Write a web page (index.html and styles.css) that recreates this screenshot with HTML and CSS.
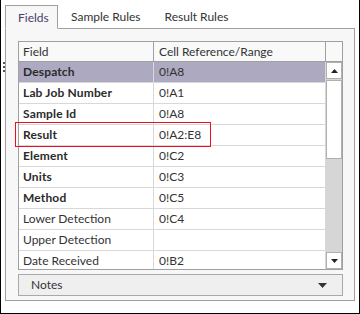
FILE: index.html
```html
<!DOCTYPE html>
<html>
<head>
<meta charset="utf-8">
<link rel="stylesheet" href="styles.css">
</head>
<body>
<div class="frame">
  <div class="grip"></div>
  <div class="tabs">
    <div class="tab active">Fields</div>
    <div class="tab">Sample Rules</div>
    <div class="tab">Result Rules</div>
  </div>
  <div class="panel">
    <div class="grid">
      <div class="head">
        <div class="c1">Field</div>
        <div class="c2">Cell Reference/Range</div>
        <div class="c3"></div>
      </div>
      <div class="body">
        <div class="rows">
          <div class="row sel"><div class="c1 b">Despatch</div><div class="c2">0!A8</div></div>
          <div class="row"><div class="c1 b">Lab Job Number</div><div class="c2">0!A1</div></div>
          <div class="row"><div class="c1 b">Sample Id</div><div class="c2">0!A8</div></div>
          <div class="row"><div class="c1 b">Result</div><div class="c2">0!A2:E8</div></div>
          <div class="row"><div class="c1 b">Element</div><div class="c2">0!C2</div></div>
          <div class="row"><div class="c1 b">Units</div><div class="c2">0!C3</div></div>
          <div class="row"><div class="c1 b">Method</div><div class="c2">0!C5</div></div>
          <div class="row"><div class="c1">Lower Detection</div><div class="c2">0!C4</div></div>
          <div class="row"><div class="c1">Upper Detection</div><div class="c2"></div></div>
          <div class="row"><div class="c1">Date Received</div><div class="c2">0!B2</div></div>
        </div>
        <div class="scroll">
          <div class="sbtn"><svg width="7" height="4" viewBox="0 0 7 4"><path d="M0 4 L3.5 0 L7 4 Z" fill="#222"/></svg></div>
          <div class="thumb"></div>
          <div class="track"></div>
          <div class="sbtn"><svg width="7" height="4" viewBox="0 0 7 4"><path d="M0 0 L7 0 L3.5 4 Z" fill="#222"/></svg></div>
        </div>
      </div>
    </div>
    <div class="notes">
      <span>Notes</span>
      <svg width="9" height="5" viewBox="0 0 9 5"><path d="M0 0 L9 0 L4.5 5 Z" fill="#333"/></svg>
    </div>
    <div class="mark"></div>
  </div>
</div>
</body>
</html>
```

FILE: styles.css
```css
* { box-sizing: border-box; }
html, body { margin: 0; padding: 0; background: #fff; }
body {
  width: 360px;
  height: 314px;
  font-family: Lato, "Open Sans", sans-serif;
  font-size: 12px;
  color: #333;
  overflow: hidden;
}
.frame {
  position: relative;
  width: 360px;
  height: 314px;
  border: 1px solid #000;
  border-top: none;
  padding: 5px 4px 0 4px;
}
.grip {
  position: absolute;
  left: 2px;
  top: 62px;
  width: 2px;
  height: 10px;
  border-left: 2px dotted #555;
}
.tabs {
  display: flex;
  align-items: flex-end;
  height: 24px;
  border-bottom: 1px solid #a0a0a0;
}
.tab {
  height: 23px;
  line-height: 23px;
  padding: 0 12px 0 13px;
  color: #333;
}
.tab.active {
  width: 53px;
  padding: 0 0 0 12px;
  height: 24px;
  margin-bottom: -1px;
  background: #f7f7f7;
  border: 1px solid #a0a0a0;
  border-bottom: 1px solid #f7f7f7;
  color: #4a3f6b;
}
.tab:nth-child(2) { padding-left: 13px; padding-right: 11px; }
.panel {
  position: relative;
  height: 272px;
  background: #f7f7f7;
  border: 1px solid #a0a0a0;
  border-top: none;
  padding: 12px 11px 0 12px;
}
.grid {
  width: 325px;
  height: 229px;
  border: 1px solid #a0a0a0;
  background: #fff;
}
.head {
  display: flex;
  height: 20px;
  border-bottom: 1px solid #a0a0a0;
  background: #f9f9f9;
  line-height: 19px;
}
.head .c1 { width: 135px; padding-left: 4px; border-right: 1px solid #a0a0a0; }
.head .c2 { width: 172px; padding-left: 5px; border-right: 1px solid #a0a0a0; }
.head .c3 { width: 16px; }
.body {
  display: flex;
  height: 207px;
  overflow: hidden;
}
.rows { width: 307px; }
.row {
  display: flex;
  height: 21px;
  border-bottom: 1px solid #d8d8d8;
  line-height: 20px;
  background: #fff;
}
.row.sel { background: #aca9c0; }
.row .c1 { width: 135px; padding-left: 4px; border-right: 1px solid #d8d8d8; white-space: nowrap; }
.row .c2 { width: 172px; padding-left: 5px; border-right: 1px solid #d8d8d8; }
.b {
  font-weight: 700;
  letter-spacing: 0.15px;
  color: #2b2b2b;
}
.scroll {
  width: 16px;
  display: flex;
  flex-direction: column;
  background: #d6d6d6;
}
.sbtn {
  height: 17px;
  background: #fff;
  border: 1px solid #b0b0b0;
  display: flex;
  align-items: center;
  justify-content: center;
}
.thumb {
  margin-top: 1px;
  height: 79px;
  background: #fff;
  border: 1px solid #b0b0b0;
}
.track { flex: 1; }
.notes {
  margin-top: 4px;
  width: 325px;
  height: 22px;
  background: #efefef;
  border: 1px solid #a9a9a9;
  display: flex;
  align-items: center;
  justify-content: space-between;
  padding: 0 15px 0 12px;
  line-height: 20px;
}
.mark {
  position: absolute;
  left: 9px;
  top: 93px;
  width: 196px;
  height: 25px;
  border: 1px solid #e8111f;
}
```
